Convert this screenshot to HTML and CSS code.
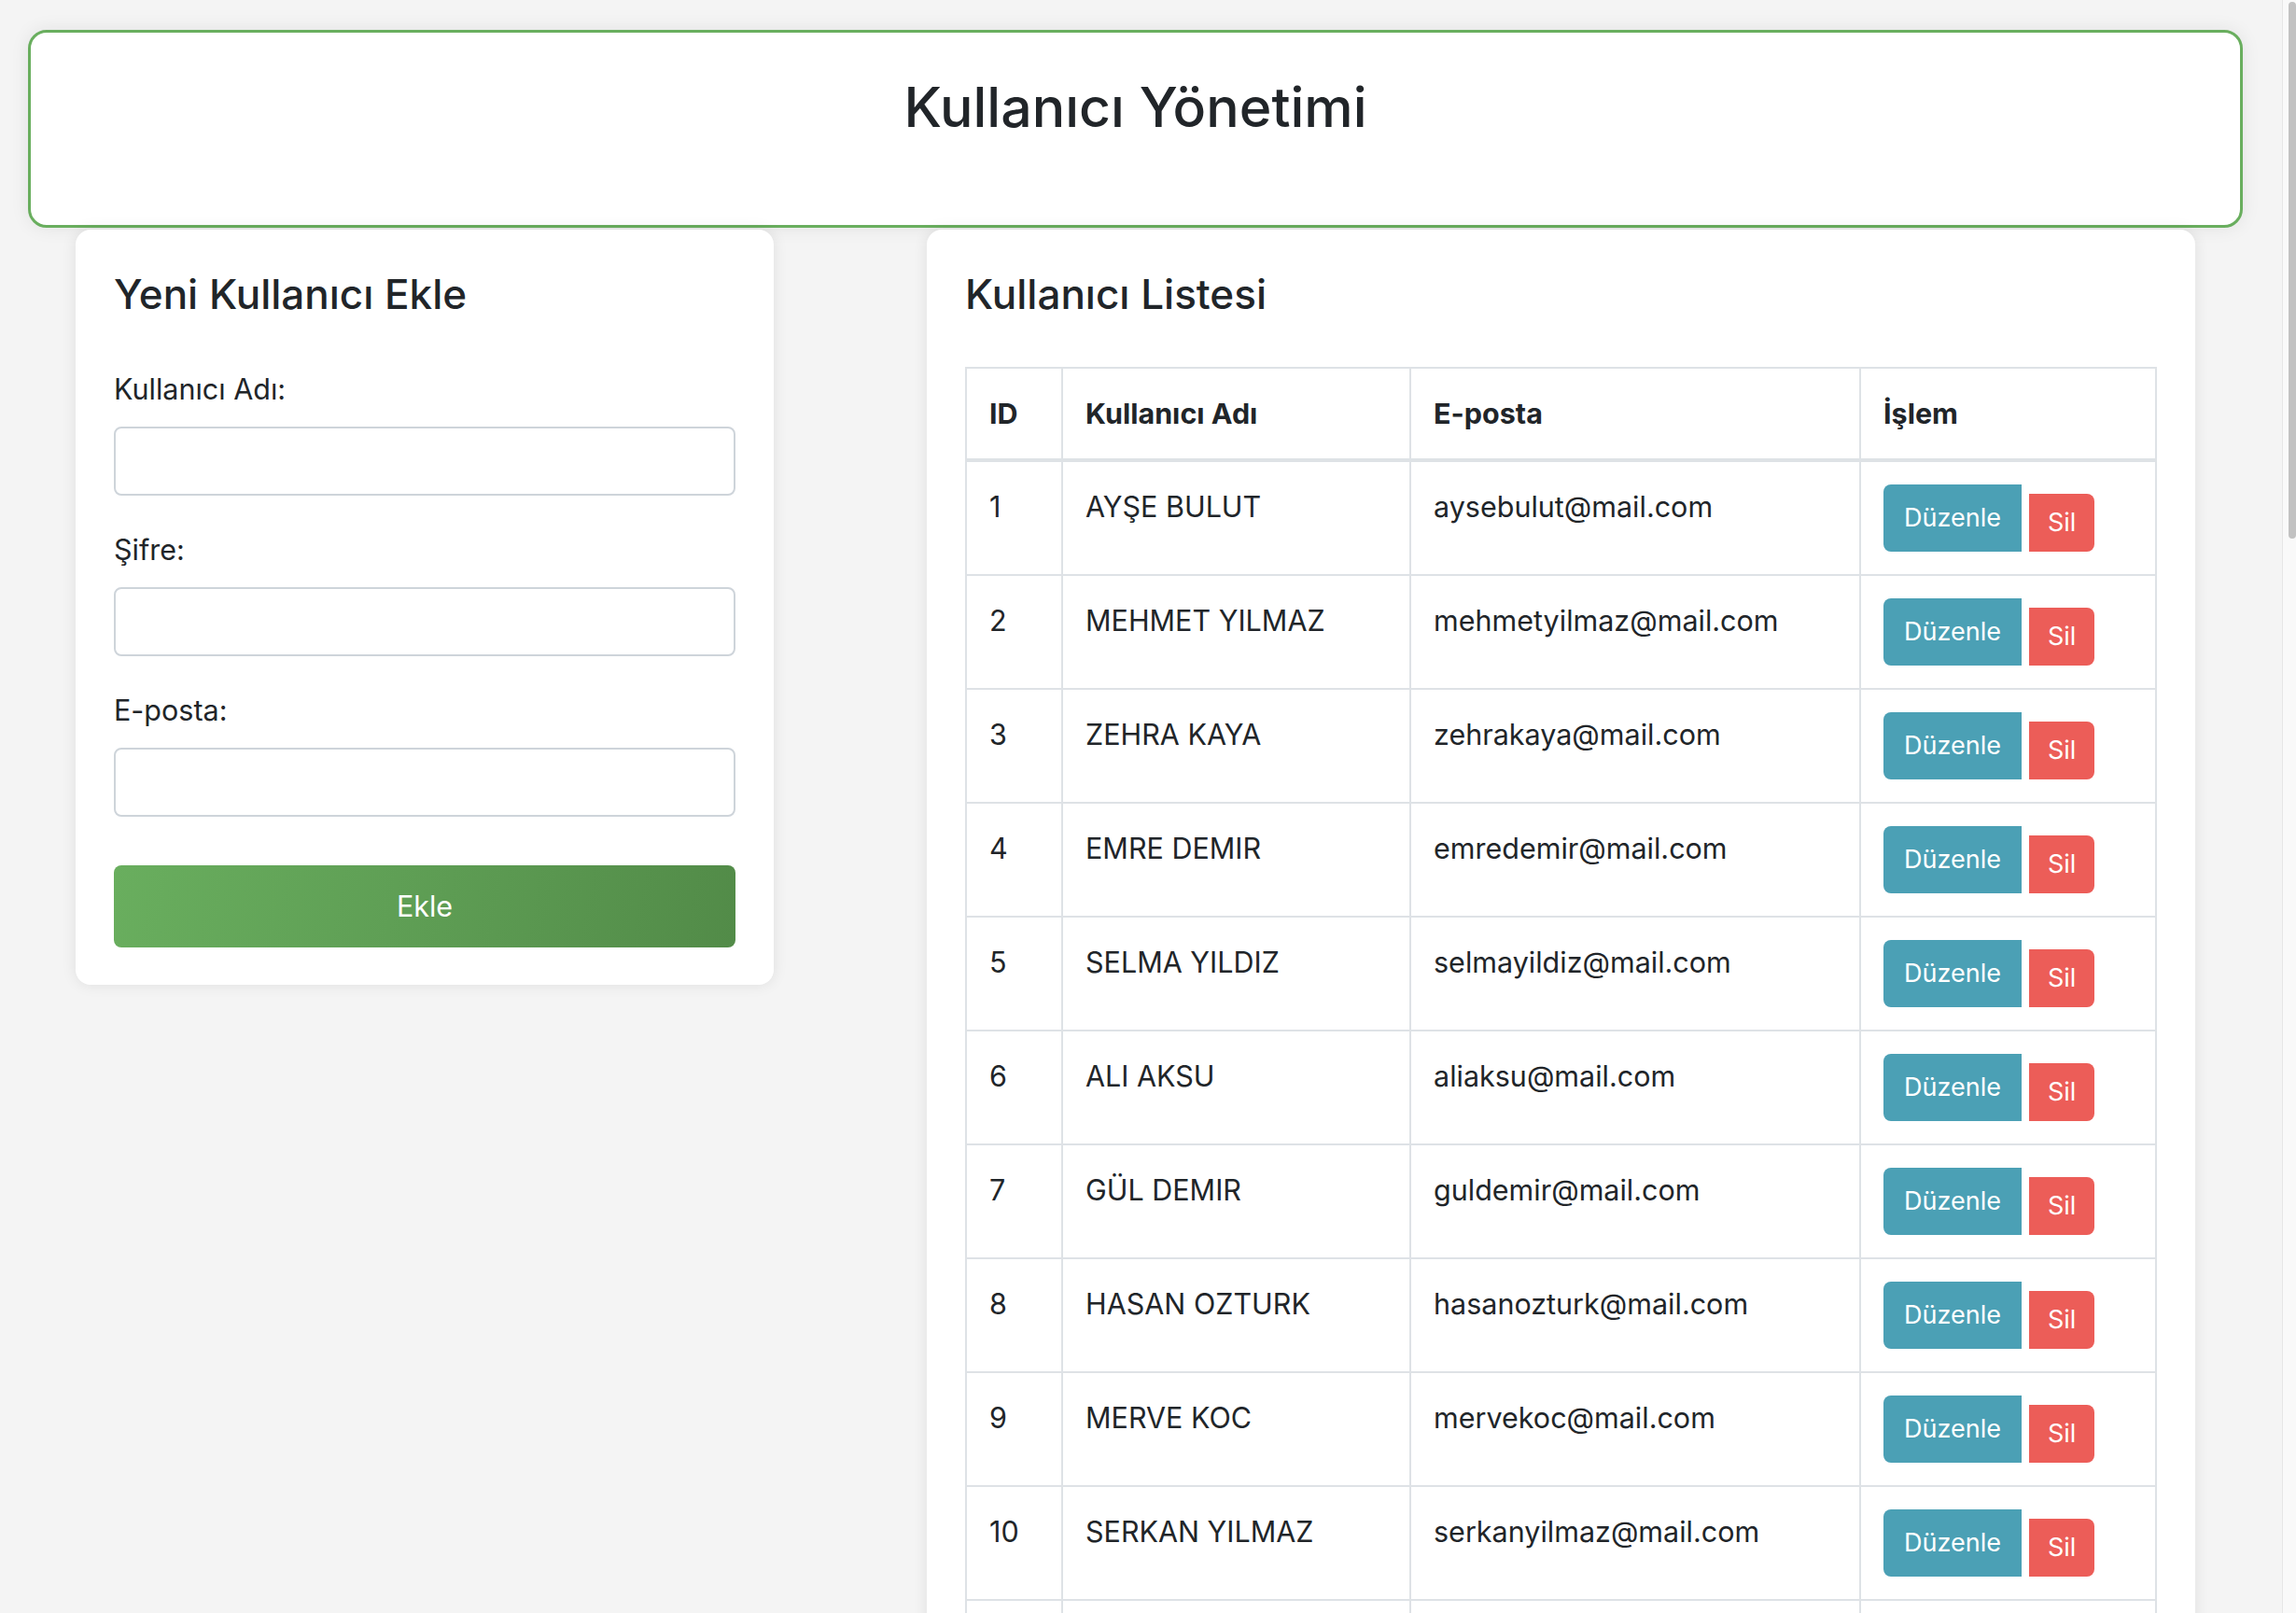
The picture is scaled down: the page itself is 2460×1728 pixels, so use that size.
FILE: index.html
```html
<!DOCTYPE html>
<html lang="tr">
<head>
<meta charset="utf-8">
<title>Kullanıcı Yönetimi</title>
<link rel="stylesheet" href="styles.css">
</head>
<body>
<div class="page">
  <header class="app-header">
    <h1 class="app-title">Kullanıcı Yönetimi</h1>
  </header>
  <main class="content">
    <section class="card form-card">
      <h2 class="card-title">Yeni Kullanıcı Ekle</h2>
      <form class="user-form">
        <label class="field-label" for="username">Kullanıcı Adı:</label>
        <input class="field-input" id="username" type="text">
        <label class="field-label" for="password">Şifre:</label>
        <input class="field-input" id="password" type="password">
        <label class="field-label" for="email">E-posta:</label>
        <input class="field-input last" id="email" type="email">
        <button class="btn-add" type="button">Ekle</button>
      </form>
    </section>
    <section class="card list-card">
      <h2 class="card-title">Kullanıcı Listesi</h2>
      <table class="user-table">
        <colgroup>
          <col class="col-id"><col class="col-name"><col class="col-mail"><col class="col-act">
        </colgroup>
        <thead>
          <tr><th>ID</th><th>Kullanıcı Adı</th><th>E-posta</th><th>İşlem</th></tr>
        </thead>
        <tbody>
          <tr><td>1</td><td>AYŞE BULUT</td><td>aysebulut@mail.com</td><td><div class="actions"><button class="btn-edit">Düzenle</button><button class="btn-del">Sil</button></div></td></tr>
          <tr><td>2</td><td>MEHMET YILMAZ</td><td>mehmetyilmaz@mail.com</td><td><div class="actions"><button class="btn-edit">Düzenle</button><button class="btn-del">Sil</button></div></td></tr>
          <tr><td>3</td><td>ZEHRA KAYA</td><td>zehrakaya@mail.com</td><td><div class="actions"><button class="btn-edit">Düzenle</button><button class="btn-del">Sil</button></div></td></tr>
          <tr><td>4</td><td>EMRE DEMIR</td><td>emredemir@mail.com</td><td><div class="actions"><button class="btn-edit">Düzenle</button><button class="btn-del">Sil</button></div></td></tr>
          <tr><td>5</td><td>SELMA YILDIZ</td><td>selmayildiz@mail.com</td><td><div class="actions"><button class="btn-edit">Düzenle</button><button class="btn-del">Sil</button></div></td></tr>
          <tr><td>6</td><td>ALI AKSU</td><td>aliaksu@mail.com</td><td><div class="actions"><button class="btn-edit">Düzenle</button><button class="btn-del">Sil</button></div></td></tr>
          <tr><td>7</td><td>GÜL DEMIR</td><td>guldemir@mail.com</td><td><div class="actions"><button class="btn-edit">Düzenle</button><button class="btn-del">Sil</button></div></td></tr>
          <tr><td>8</td><td>HASAN OZTURK</td><td>hasanozturk@mail.com</td><td><div class="actions"><button class="btn-edit">Düzenle</button><button class="btn-del">Sil</button></div></td></tr>
          <tr><td>9</td><td>MERVE KOC</td><td>mervekoc@mail.com</td><td><div class="actions"><button class="btn-edit">Düzenle</button><button class="btn-del">Sil</button></div></td></tr>
          <tr><td>10</td><td>SERKAN YILMAZ</td><td>serkanyilmaz@mail.com</td><td><div class="actions"><button class="btn-edit">Düzenle</button><button class="btn-del">Sil</button></div></td></tr>
          <tr><td>11</td><td>ELIF SAHIN</td><td>elifsahin@mail.com</td><td><div class="actions"><button class="btn-edit">Düzenle</button><button class="btn-del">Sil</button></div></td></tr>
          <tr><td>12</td><td>BURAK CELIK</td><td>burakcelik@mail.com</td><td><div class="actions"><button class="btn-edit">Düzenle</button><button class="btn-del">Sil</button></div></td></tr>
          <tr><td>13</td><td>DENIZ ARSLAN</td><td>denizarslan@mail.com</td><td><div class="actions"><button class="btn-edit">Düzenle</button><button class="btn-del">Sil</button></div></td></tr>
          <tr><td>14</td><td>CAN KURT</td><td>cankurt@mail.com</td><td><div class="actions"><button class="btn-edit">Düzenle</button><button class="btn-del">Sil</button></div></td></tr>
          <tr><td>15</td><td>ECE DOGAN</td><td>ecedogan@mail.com</td><td><div class="actions"><button class="btn-edit">Düzenle</button><button class="btn-del">Sil</button></div></td></tr>
          <tr><td>16</td><td>MURAT AYDIN</td><td>murataydin@mail.com</td><td><div class="actions"><button class="btn-edit">Düzenle</button><button class="btn-del">Sil</button></div></td></tr>
          <tr><td>17</td><td>SEDA KOCAK</td><td>sedakocak@mail.com</td><td><div class="actions"><button class="btn-edit">Düzenle</button><button class="btn-del">Sil</button></div></td></tr>
          <tr><td>18</td><td>OZAN POLAT</td><td>ozanpolat@mail.com</td><td><div class="actions"><button class="btn-edit">Düzenle</button><button class="btn-del">Sil</button></div></td></tr>
          <tr><td>19</td><td>BUSE ERDEM</td><td>buseerdem@mail.com</td><td><div class="actions"><button class="btn-edit">Düzenle</button><button class="btn-del">Sil</button></div></td></tr>
          <tr><td>20</td><td>KEREM ACAR</td><td>keremacar@mail.com</td><td><div class="actions"><button class="btn-edit">Düzenle</button><button class="btn-del">Sil</button></div></td></tr>
          <tr><td>21</td><td>IREM TURAN</td><td>iremturan@mail.com</td><td><div class="actions"><button class="btn-edit">Düzenle</button><button class="btn-del">Sil</button></div></td></tr>
          <tr><td>22</td><td>ONUR KILIC</td><td>onurkilic@mail.com</td><td><div class="actions"><button class="btn-edit">Düzenle</button><button class="btn-del">Sil</button></div></td></tr>
          <tr><td>23</td><td>DILARA OZ</td><td>dilaraoz@mail.com</td><td><div class="actions"><button class="btn-edit">Düzenle</button><button class="btn-del">Sil</button></div></td></tr>
          <tr><td>24</td><td>EMIR YAVUZ</td><td>emiryavuz@mail.com</td><td><div class="actions"><button class="btn-edit">Düzenle</button><button class="btn-del">Sil</button></div></td></tr>
          <tr><td>25</td><td>NAZLI CAN</td><td>nazlican@mail.com</td><td><div class="actions"><button class="btn-edit">Düzenle</button><button class="btn-del">Sil</button></div></td></tr>
          <tr><td>26</td><td>TOLGA GUNES</td><td>tolgagunes@mail.com</td><td><div class="actions"><button class="btn-edit">Düzenle</button><button class="btn-del">Sil</button></div></td></tr>
          <tr><td>27</td><td>MELIS KARA</td><td>meliskara@mail.com</td><td><div class="actions"><button class="btn-edit">Düzenle</button><button class="btn-del">Sil</button></div></td></tr>
          <tr><td>28</td><td>UMUT TEKIN</td><td>umuttekin@mail.com</td><td><div class="actions"><button class="btn-edit">Düzenle</button><button class="btn-del">Sil</button></div></td></tr>
          <tr><td>29</td><td>CEREN BAL</td><td>cerenbal@mail.com</td><td><div class="actions"><button class="btn-edit">Düzenle</button><button class="btn-del">Sil</button></div></td></tr>
          <tr><td>30</td><td>BARIS OKTAY</td><td>barisoktay@mail.com</td><td><div class="actions"><button class="btn-edit">Düzenle</button><button class="btn-del">Sil</button></div></td></tr>
          <tr><td>31</td><td>ESRA GULER</td><td>esraguler@mail.com</td><td><div class="actions"><button class="btn-edit">Düzenle</button><button class="btn-del">Sil</button></div></td></tr>
          <tr><td>32</td><td>KAAN ER</td><td>kaaner@mail.com</td><td><div class="actions"><button class="btn-edit">Düzenle</button><button class="btn-del">Sil</button></div></td></tr>
          <tr><td>33</td><td>PINAR AKIN</td><td>pinarakin@mail.com</td><td><div class="actions"><button class="btn-edit">Düzenle</button><button class="btn-del">Sil</button></div></td></tr>
          <tr><td>34</td><td>SINAN UCAR</td><td>sinanucar@mail.com</td><td><div class="actions"><button class="btn-edit">Düzenle</button><button class="btn-del">Sil</button></div></td></tr>
          <tr><td>35</td><td>GIZEM CETIN</td><td>gizemcetin@mail.com</td><td><div class="actions"><button class="btn-edit">Düzenle</button><button class="btn-del">Sil</button></div></td></tr>
          <tr><td>36</td><td>VOLKAN SOYLU</td><td>volkansoylu@mail.com</td><td><div class="actions"><button class="btn-edit">Düzenle</button><button class="btn-del">Sil</button></div></td></tr>
          <tr><td>37</td><td>AYLIN KOSE</td><td>aylinkose@mail.com</td><td><div class="actions"><button class="btn-edit">Düzenle</button><button class="btn-del">Sil</button></div></td></tr>
          <tr><td>38</td><td>HAKAN ORHAN</td><td>hakanorhan@mail.com</td><td><div class="actions"><button class="btn-edit">Düzenle</button><button class="btn-del">Sil</button></div></td></tr>
        </tbody>
      </table>
    </section>
  </main>
</div>
<div class="scrollbar" aria-hidden="true"><div class="scrollbar-thumb"></div></div>
</body>
</html>
```

FILE: styles.css
```css
* { box-sizing: border-box; }

html, body {
  margin: 0;
  padding: 0;
}

body {
  background: #f4f4f4;
  color: #212529;
  font-family: Inter, "Noto Sans", "Liberation Sans", sans-serif;
  font-size: 30.5px;
  line-height: 1.5;
}

.page {
  width: 2373px;
  margin-left: 30px;
  padding-top: 32px;
  padding-bottom: 30px;
}

.app-header {
  background: #fff;
  border: 3px solid #69ae5e;
  border-radius: 20px;
  box-shadow: 0 0 20px rgba(0, 0, 0, 0.08);
  height: 212px;
  padding-top: 43px;
  text-align: center;
}

.app-title {
  margin: 0;
  font-size: 59px;
  font-weight: 500;
  line-height: 74px;
}

.content {
  display: flex;
  justify-content: space-between;
  align-items: flex-start;
  padding: 0 51px;
  margin-top: 2px;
}

.card {
  background: #fff;
  border-radius: 16px;
  box-shadow: 0 0 16px rgba(0, 0, 0, 0.09);
  padding: 41px 41px 40px;
}

.form-card { width: 748px; }
.list-card { width: 1359px; }

.card-title {
  margin: 0 0 48px;
  font-size: 44px;
  font-weight: 500;
  line-height: 57.6px;
}

.user-form {
  display: flex;
  flex-direction: column;
}

.field-label {
  display: block;
  margin-bottom: 16px;
  line-height: 48px;
}

.field-input {
  display: block;
  width: 100%;
  height: 74px;
  margin: 0 0 34px;
  border: 2px solid #ced4da;
  border-radius: 8px;
  background: #fff;
  font: inherit;
}

.field-input.last { margin-bottom: 52px; }

.btn-add {
  height: 88px;
  width: 100%;
  border: 0;
  border-radius: 8px;
  background: linear-gradient(100deg, #69ae5e 0%, #5f9f55 45%, #528b48 100%);
  color: #fff;
  font-family: inherit;
  font-size: 30.5px;
  font-weight: 400;
}

.user-table {
  width: 100%;
  border-collapse: collapse;
  table-layout: fixed;
  border: 2px solid #dee2e6;
}

.col-id { width: 103px; }
.col-name { width: 373px; }
.col-mail { width: 482px; }
.col-act { width: 317px; }

.user-table th,
.user-table td {
  border: 2px solid #dee2e6;
  padding: 24px;
  text-align: left;
  vertical-align: top;
  line-height: 48px;
}

.user-table th {
  font-weight: 700;
  border-bottom-width: 4px;
}

.actions {
  display: flex;
  align-items: flex-end;
  gap: 8px;
}

.btn-edit,
.btn-del {
  border: 0;
  color: #fff;
  font-family: inherit;
  font-size: 27px;
  line-height: 42px;
}

.btn-edit {
  background: #4ba0b5;
  padding: 15px 22px;
  border-radius: 8px 0 0 8px;
}

.btn-del {
  background: #ec5d58;
  padding: 10px 20px;
  border-radius: 0 8px 8px 0;
}

.scrollbar {
  position: fixed;
  top: 0;
  right: 0;
  bottom: 0;
  width: 15px;
  background: #f9f9f9;
  border-left: 1px solid #e6e6e6;
}

.scrollbar-thumb {
  position: absolute;
  top: 2px;
  left: 6px;
  width: 8px;
  height: 575px;
  border-radius: 4px;
  background: #c2c2c2;
}
```
